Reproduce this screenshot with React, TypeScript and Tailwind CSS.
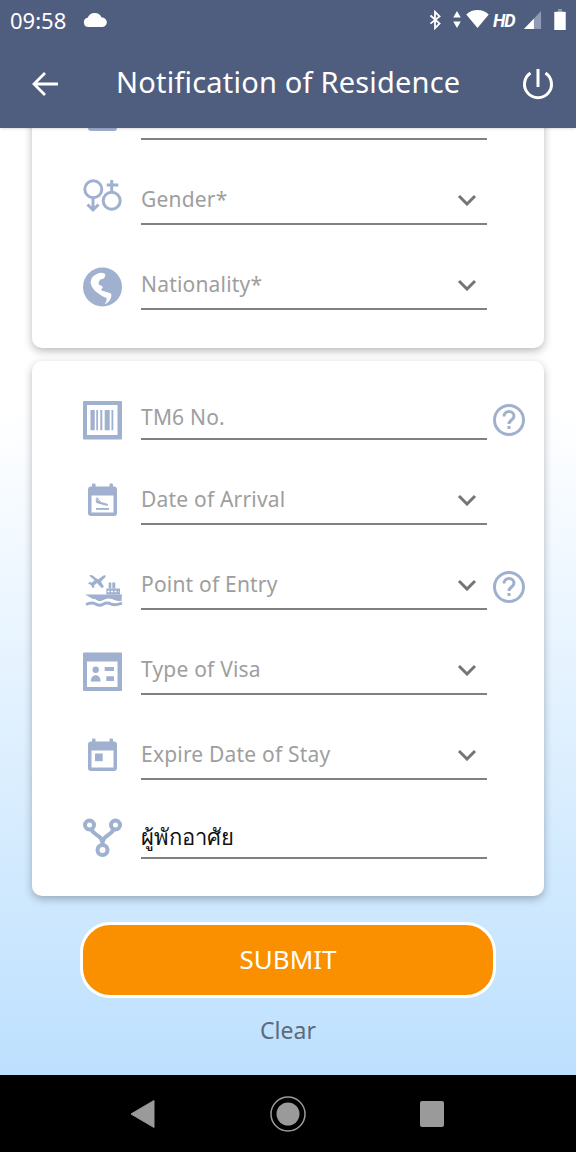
import { ReactNode } from "react";

const font = { fontFamily: '"Noto Sans", "Open Sans", sans-serif' };

const Chevron = () => (
  <svg width="20" height="12" viewBox="0 0 20 12" className="mr-[10px]">
    <path d="M2 2l8 8 8-8" fill="none" stroke="#757575" strokeWidth="3" />
  </svg>
);

const Help = ({ className }: { className: string }) => (
  <svg width="32" height="32" viewBox="0 0 32 32" className={className}>
    <circle cx="16" cy="16" r="14.5" fill="none" stroke="#a0b0cf" strokeWidth="3" />
    <path d="M11 12.5c0-3 2.2-5 5-5s5 2 5 4.6c0 3.9-5 3.9-5 7.900" fill="none" stroke="#a0b0cf" strokeWidth="3" />
    <rect x="14.5" y="22" width="3" height="3" fill="#a0b0cf" />
  </svg>
);

const CalendarBase = ({ children }: { children: ReactNode }) => (
  <svg width="40" height="40" viewBox="0 0 40 40">
    <rect x="5" y="6.5" width="29" height="29.5" rx="3" fill="#a0b0cf" />
    <rect x="9" y="3.500" width="3.500" height="6" rx="1" fill="#a0b0cf" />
    <rect x="26.5" y="3.500" width="3.500" height="6" rx="1" fill="#a0b0cf" />
    <rect x="8.5" y="15.500" width="22" height="17" fill="#fff" />
    {children}
  </svg>
);

const icons = {
  calendar: (
    <CalendarBase>
      <rect x="12" y="18.500" width="7.700" height="7.700" fill="#a0b0cf" />
    </CalendarBase>
  ),
  arrival: (
    <CalendarBase>
      <path d="M12.500 18l2-.500 3.500 4.500 5.500 1.500c2 .500 2 2.500 0 2.200l-10-2.700-1-3.500 1.500-.300 1 1.500 1.800.500z" fill="#a0b0cf" />
      <rect x="13" y="28" width="13" height="1.800" fill="#a0b0cf" />
    </CalendarBase>
  ),
  gender: (
    <svg width="40" height="40" viewBox="0 0 40 40" fill="none" stroke="#a0b0cf" strokeWidth="3">
      <circle cx="10.300" cy="13.300" r="8.500" />
      <path d="M10 21.500v12.500M4.500 28.500l5.500 5.500 5.500-5.500" />
      <circle cx="28.700" cy="24.700" r="8.500" />
      <path d="M28.700 4v12M23.700 9h11.600" />
    </svg>
  ),
  globe: (
    <svg width="40" height="40" viewBox="0 0 40 40">
      <circle cx="19.500" cy="20" r="19.500" fill="#a0b0cf" />
      <path d="M7.700 14C8.500 11 10 9 11.700 8.300 14 6.500 16 5.700 17.700 5.700c3 0 5 1 4.600 2.600-.300 1.700-1 3-2 3.400-1.500.500-3 .400-3.300 1.300-.800 1.500-2 3-1.300 4.300.800 1.400 3 1 4 2.400.500 1-1.700 2-1.400 3.300 1 1.500 3.200.800 5 2 2.500 1 4.800 1 5 2.300.300 2-.500 4-1.300 5.700-1.500 2-4 3.800-5.300 4.300 1-2.500 2.500-3.800 2-5.600-.500-1.500-3-1.200-4.700-2.700-2-1.600-3.700-2.500-5.700-4-2-2-3.500-3.500-4.300-5.300-.800-1.700-1.500-3-1.300-5.700z" fill="#fff" />
    </svg>
  ),
  barcode: (
    <svg width="40" height="40" viewBox="0 0 40 40">
      <rect x="0" y="1" width="39" height="38.500" rx="1" fill="#a0b0cf" />
      <rect x="4" y="5" width="30.500" height="30" fill="#fff" />
      <path d="M7.500 10h4.200v20.300H7.500zM13.300 10H15v20.300h-1.700zM17.300 10h2v20.300h-2zM21.700 10h5v20.300h-5zM28.500 10h1.800v20.300h-1.800z" fill="#a0b0cf" />
    </svg>
  ),
  ship: (
    <svg width="40" height="40" viewBox="0 0 40 40" fill="#a0b0cf">
      <path d="M6 5.500l3-.500 6 4.500 5-3.800c1.500-1 3.500-.500 2.500 1.300L18 11.500 21 17l-2.500 1-4.500-5-3 2.500.500 2-2 .500-1.500-3-3-1.500 1.500-1.500 2.500.500 2.500-2.300z" />
      <path d="M25.700 12.500h2.600v6h-2.600zM29.300 12.500h3v6h-3z" />
      <path d="M23.300 18.500H37v6h-13.700z" />
      <path d="M2 24.500L39 24.500 38.500 31c-3.500.300-6-.500-9-1.800-3-1.200-5.500-1-8 .300-3 1.500-5 2-7 1-2-1-3-1.500-4.500-1.400z" />
      <path d="M3 34.500c3-1.500 5.500-2.500 8.500-1 3 1.800 5.500 2.500 8.500.700 3-1.700 5.500-1.700 8.500 0 3 1.500 6 .500 10.500-1" fill="none" stroke="#a0b0cf" strokeWidth="3" />
      <path d="M24.500 21.500h11" stroke="#fff" strokeWidth="1.500" strokeDasharray="2 1.500" />
    </svg>
  ),
  visa: (
    <svg width="40" height="40" viewBox="0 0 40 40">
      <rect x="0" y="0.500" width="39" height="38.500" rx="1" fill="#a0b0cf" />
      <rect x="4" y="9.500" width="30.500" height="25.500" fill="#fff" />
      <circle cx="12.700" cy="17.700" r="3.200" fill="#a0b0cf" />
      <path d="M7.800 29.500c0-4 2-6.300 4.900-6.300s4.900 2.300 4.900 6.300z" fill="#a0b0cf" />
      <path d="M21.700 15H31v4h-9.300zM23.300 24.300H31V29h-7.700z" fill="#a0b0cf" />
    </svg>
  ),
  fork: (
    <svg width="40" height="40" viewBox="0 0 40 40" fill="none" stroke="#a0b0cf" strokeWidth="4">
      <circle cx="6.500" cy="8" r="4.500" />
      <circle cx="32.500" cy="8" r="4.500" />
      <circle cx="19.500" cy="33" r="5" />
      <path d="M8.500 12.500c2 6 11 5 11 15M30.500 12.500c-2 6-11 5-11 15" />
    </svg>
  ),
};

type RowProps = {
  icon: ReactNode;
  iconMb: string;
  label: string;
  height?: string;
  select?: boolean;
  value?: boolean;
  fieldH?: string;
  help?: string;
};

const Row = ({ icon, iconMb, label, height = "h-[85px]", select = true, value, fieldH = "h-[48px]", help }: RowProps) => (
  <div className={`flex items-end pl-[51px] ${height}`}>
    <div className={`w-[40px] h-[40px] shrink-0 ${iconMb}`}>{icon}</div>
    <div className={`ml-[18px] w-[346px] shrink-0 border-b-2 border-[#808080] flex items-center justify-between ${fieldH}`}>
      <span className={value ? "text-[22px] text-[#111]" : "text-[21px] tracking-[0.2px] text-[#9e9e9e]"}>{label}</span>
      {select && <Chevron />}
    </div>
    {help && <Help className={`ml-[6px] shrink-0 ${help}`} />}
  </div>
);

export default function App() {
  return (
    <div className="w-[576px] h-[1152px] flex flex-col overflow-hidden" style={font}>
      <header className="h-[128px] shrink-0 bg-[#4f5d7e] text-white relative z-10 shadow-sm">
        <div className="h-[40px] flex items-center pl-[10px] pr-[10px]">
          <span className="text-[22px] w-[73px]">09:58</span>
          <svg width="25" height="17" viewBox="0 0 25 18" fill="#fff" className="-mt-[1px]">
            <path d="M5 17a5 5 0 0 1-.8-9.900A8 8 0 0 1 12 2a7.500 7.500 0 0 1 7 5 5 5 0 0 1 1 10z" />
          </svg>
          <div className="flex-1" />
          <svg width="12" height="20" viewBox="0 0 12 22" fill="none" stroke="#fff" strokeWidth="2" className="mr-[12px]">
            <path d="M1 6l10 9-5 5V2l5 5-10 8" />
          </svg>
          <svg width="8" height="17" viewBox="0 0 8 18" fill="#fff" className="mr-[4px] -mt-[2px]">
            <path d="M4 0l4 7H0zM0 11h8l-4 7z" />
          </svg>
          <svg width="25" height="18" viewBox="0 0 25 20" fill="#fff" className="mr-[3px] -mt-[2px]">
            <path d="M12.500 20L0 5C7-1.500 18-1.500 25 5z" />
          </svg>
          <span className="text-[18px] font-bold italic w-[30px] tracking-[-1px]" style={{ fontFamily: '"Roboto", sans-serif' }}>HD</span>
          <svg width="19" height="18" viewBox="0 0 19 20" className="mr-[12px]">
            <path d="M19 0v20H0z" fill="#8f9bb6" />
            <path d="M11 8.500V20H0z" fill="#fff" />
          </svg>
          <svg width="12" height="21" viewBox="0 0 12 22" className="-mt-[2px]">
            <path d="M3 2h1V0h4v2h1v3H3z" fill="#8f9bb6" />
            <path d="M0 3h12v19H0z" fill="#fff" />
          </svg>
        </div>
        <div className="h-[84px] flex items-center relative">
          <svg width="28" height="28" viewBox="0 0 28 28" fill="none" stroke="#fff" strokeWidth="2.800" className="ml-[31px] mt-[3px]">
            <path d="M27 14H3M14 3L3 14l11 11" />
          </svg>
          <h1 className="ml-[57px] text-[29px] tracking-[0.2px] font-normal">Notification of Residence</h1>
          <svg width="32" height="32" viewBox="0 0 32 32" fill="none" stroke="#fff" strokeWidth="3" className="ml-auto mr-[22px] mt-[4px]">
            <path d="M8.500 5A13.500 13.500 0 1 0 23.500 5M16 1v18" />
          </svg>
        </div>
      </header>

      <main className="flex-1 overflow-hidden bg-gradient-to-b from-white from-[30%] to-[#bde0fe] flex flex-col">
        <section className="mx-[32px] -mt-[73px] shrink-0 bg-white rounded-[10px] shadow-[0_3px_8px_rgba(0,0,0,0.28)] pb-[38px]">
          <Row icon={icons.calendar} iconMb="mb-[5px]" label="" />
          <Row icon={icons.gender} iconMb="mb-[9px]" label="Gender*" />
          <Row icon={icons.globe} iconMb="mb-[3px]" label="Nationality*" />
        </section>

        <section className="mx-[32px] mt-[13px] shrink-0 bg-white rounded-[10px] shadow-[0_3px_8px_rgba(0,0,0,0.28)] pb-[37px]">
          <Row icon={icons.barcode} iconMb="mb-0" label="TM6 No." height="h-[79px]" select={false} fieldH="h-[42px]" help="mb-[4px]" />
          <Row icon={icons.arrival} iconMb="mb-[5px]" label="Date of Arrival" />
          <Row icon={icons.ship} iconMb="mb-0" label="Point of Entry" help="mb-[7px]" />
          <Row icon={icons.visa} iconMb="mb-[3px]" label="Type of Visa" />
          <Row icon={icons.calendar} iconMb="mb-[5px]" label="Expire Date of Stay" />
          <Row icon={icons.fork} iconMb="mb-[2px]" label="ผู้พักอาศัย" height="h-[79px]" select={false} value fieldH="h-[44px]" />
        </section>

        <button className="mt-[26px] mx-auto shrink-0 w-[416px] h-[76px] pb-[2px] rounded-[30px] border-[3px] border-white bg-[#fa9000] text-white text-[26px]">
          SUBMIT
        </button>
        <div className="mt-[15px] text-center text-[23px] text-[#5a6b7d]">Clear</div>
      </main>

      <nav className="h-[77px] shrink-0 bg-black flex items-center relative">
        <svg width="24" height="28" viewBox="0 0 24 28" fill="#9a9a9a" className="ml-[131px]">
          <path d="M23 0.500v27L0 14z" stroke="#9a9a9a" strokeLinejoin="round" />
        </svg>
        <svg width="36" height="38" viewBox="0 0 36 38" className="ml-[115px]">
          <circle cx="18" cy="19" r="17" fill="none" stroke="#9a9a9a" strokeWidth="1.500" />
          <circle cx="18" cy="19" r="11.500" fill="#9a9a9a" />
        </svg>
        <div className="ml-[114px] w-[24px] h-[26px] rounded-[2px] bg-[#9a9a9a]" />
      </nav>
    </div>
  );
}
